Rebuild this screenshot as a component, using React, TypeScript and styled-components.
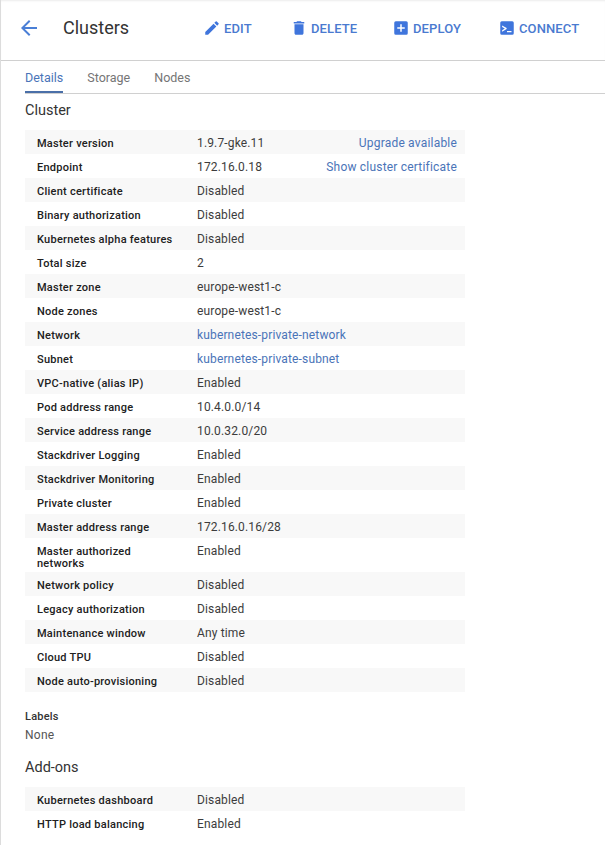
import React from "react";
import styled, { createGlobalStyle } from "styled-components";

const Global = createGlobalStyle`
  html, body { margin: 0; padding: 0; background: #fff; }
  body { font-family: Roboto, "Liberation Sans", sans-serif; overflow: hidden; }
`;
const Page = styled.div`
  width: 605px; height: 845px; overflow: hidden; box-sizing: border-box;
  border-left: 1px solid #dcdcdc; background: #fff;
`;
const Header = styled.header`
  height: 61px; box-sizing: border-box; display: flex; align-items: center;
  border-bottom: 1px solid #d0d0d0; padding: 0 0 4px 16px;
  box-shadow: inset 0 2px 2px -1px #ececec;
`;
const BackButton = styled.svg`
  width: 24px; height: 24px; fill: #4a7fd6; flex: none;
`;
const Title = styled.h1`
  margin: 0 0 0 22px; width: 140px; font-size: 18px; font-weight: 400; color: #333; line-height: 24px;
`;
const Action = styled.div<{ $w: number }>`
  display: flex; align-items: center; gap: 3px; width: ${p => p.$w}px; flex: none;
  color: #4a7ad0; font-size: 13px; font-weight: 500; letter-spacing: 0.1px;
`;
const ActionIcon = styled.svg`
  width: 18px; height: 18px; fill: #3f75dc; flex: none;
`;
const Tabs = styled.nav`
  display: flex; gap: 24px; height: 33px; box-sizing: border-box; margin-left: 24px;
  border-bottom: 1px solid #d0d0d0; padding-top: 9px;
`;
const Tab = styled.div<{ $active?: boolean }>`
  height: 23px; box-sizing: border-box; font-size: 12.5px; line-height: 16px;
  color: ${p => (p.$active ? "#4a74b8" : "#757575")};
  border-bottom: ${p => (p.$active ? "2px solid #4a6fa8" : "none")};
`;
const Content = styled.main`
  padding: 0 0 0 24px;
`;
const Heading = styled.h2<{ $top: number }>`
  margin: ${p => p.$top}px 0 9px; font-size: 14.5px; font-weight: 400; line-height: 20px; color: #333;
`;
const Table = styled.div`
  width: 440px; display: flex; flex-direction: column;
`;
const Row = styled.div`
  display: flex; align-items: flex-start; box-sizing: border-box; padding: 6px 8px 4px 12px;
  &:nth-child(odd) { background: #f8f8f8; }
`;
const Key = styled.div<{ $narrow?: boolean }>`
  width: ${p => (p.$narrow ? 120 : 160)}px; margin-right: ${p => (p.$narrow ? 40 : 0)}px;
  margin-bottom: -2px; flex: none; padding-top: 2px; font-size: 11px; font-weight: 500; line-height: 12px;
  color: #212121; letter-spacing: 0.25px;
`;
const Value = styled.div`
  flex: 1; font-size: 12px; line-height: 14px; color: #3c3c3c; letter-spacing: 0.15px;
`;
const LinkValue = styled(Value)`
  color: #4a74b8;
`;
const Aside = styled.div`
  font-size: 12px; line-height: 14px; color: #4a74b8; letter-spacing: 0.2px;
`;
const LabelsBlock = styled.div`
  margin-top: 19px;
`;
const LabelTitle = styled.div`
  font-size: 11px; font-weight: 500; line-height: 12px; color: #333; letter-spacing: 0.2px;
`;
const LabelValue = styled.div`
  font-size: 12px; line-height: 14px; margin-top: 5px; color: #555; letter-spacing: 0.25px;
`;

type R = { k: string; v: string; link?: boolean; aside?: string };
const cluster: R[] = [
  { k: "Master version", v: "1.9.7-gke.11", aside: "Upgrade available" },
  { k: "Endpoint", v: "172.16.0.18", aside: "Show cluster certificate" },
  { k: "Client certificate", v: "Disabled" },
  { k: "Binary authorization", v: "Disabled" },
  { k: "Kubernetes alpha features", v: "Disabled" },
  { k: "Total size", v: "2" },
  { k: "Master zone", v: "europe-west1-c" },
  { k: "Node zones", v: "europe-west1-c" },
  { k: "Network", v: "kubernetes-private-network", link: true },
  { k: "Subnet", v: "kubernetes-private-subnet", link: true },
  { k: "VPC-native (alias IP)", v: "Enabled" },
  { k: "Pod address range", v: "10.4.0.0/14" },
  { k: "Service address range", v: "10.0.32.0/20" },
  { k: "Stackdriver Logging", v: "Enabled" },
  { k: "Stackdriver Monitoring", v: "Enabled" },
  { k: "Private cluster", v: "Enabled" },
  { k: "Master address range", v: "172.16.0.16/28" },
  { k: "Master authorized networks", v: "Enabled" },
  { k: "Network policy", v: "Disabled" },
  { k: "Legacy authorization", v: "Disabled" },
  { k: "Maintenance window", v: "Any time" },
  { k: "Cloud TPU", v: "Disabled" },
  { k: "Node auto-provisioning", v: "Disabled" },
];
const addons: R[] = [
  { k: "Kubernetes dashboard", v: "Disabled" },
  { k: "HTTP load balancing", v: "Enabled" },
];

const Rows = ({ rows }: { rows: R[] }) => (
  <Table>
    {rows.map(r => (
      <Row key={r.k}>
        <Key $narrow={r.k === "Master authorized networks"}>{r.k}</Key>
        {r.link ? <LinkValue>{r.v}</LinkValue> : <Value>{r.v}</Value>}
        {r.aside && <Aside>{r.aside}</Aside>}
      </Row>
    ))}
  </Table>
);

export default function App() {
  return (
    <Page>
      <Global />
      <Header>
        <BackButton viewBox="0 0 24 24"><path d="M20 11H7.83l5.59-5.59L12 4l-8 8 8 8 1.41-1.41L7.83 13H20v-2z" /></BackButton>
        <Title>Clusters</Title>
        <Action $w={87}>
          <ActionIcon viewBox="0 0 24 24"><path d="M3 17.25V21h3.75L17.81 9.94l-3.75-3.75L3 17.25zM20.71 7.04a1 1 0 0 0 0-1.41l-2.34-2.34a1 1 0 0 0-1.41 0l-1.83 1.83 3.75 3.75 1.83-1.83z" /></ActionIcon>
          EDIT
        </Action>
        <Action $w={102}>
          <ActionIcon viewBox="0 0 24 24"><path d="M6 19c0 1.1.9 2 2 2h8c1.1 0 2-.9 2-2V7H6v12zM19 4h-3.5l-1-1h-5l-1 1H5v2h14V4z" /></ActionIcon>
          DELETE
        </Action>
        <Action $w={106}>
          <ActionIcon viewBox="0 0 24 24"><path d="M19 3H5a2 2 0 0 0-2 2v14a2 2 0 0 0 2 2h14a2 2 0 0 0 2-2V5a2 2 0 0 0-2-2zm-2 10h-4v4h-2v-4H7v-2h4V7h2v4h4v2z" /></ActionIcon>
          DEPLOY
        </Action>
        <Action $w={90}>
          <ActionIcon viewBox="0 0 24 24"><path fillRule="evenodd" d="M5 3h14a2 2 0 0 1 2 2v14a2 2 0 0 1-2 2H5a2 2 0 0 1-2-2V5a2 2 0 0 1 2-2zm.5 5.5v2l3.6 2.2-3.6 2.3v2l6-3.6v-1.3l-6-3.6zM12 16v1.5h6V16h-6z" /></ActionIcon>
          CONNECT
        </Action>
      </Header>
      <Tabs>
        <Tab $active>Details</Tab>
        <Tab>Storage</Tab>
        <Tab>Nodes</Tab>
      </Tabs>
      <Content>
        <Heading $top={7}>Cluster</Heading>
        <Rows rows={cluster} />
        <LabelsBlock>
          <LabelTitle>Labels</LabelTitle>
          <LabelValue>None</LabelValue>
        </LabelsBlock>
        <Heading $top={16}>Add-ons</Heading>
        <Rows rows={addons} />
      </Content>
    </Page>
  );
}
